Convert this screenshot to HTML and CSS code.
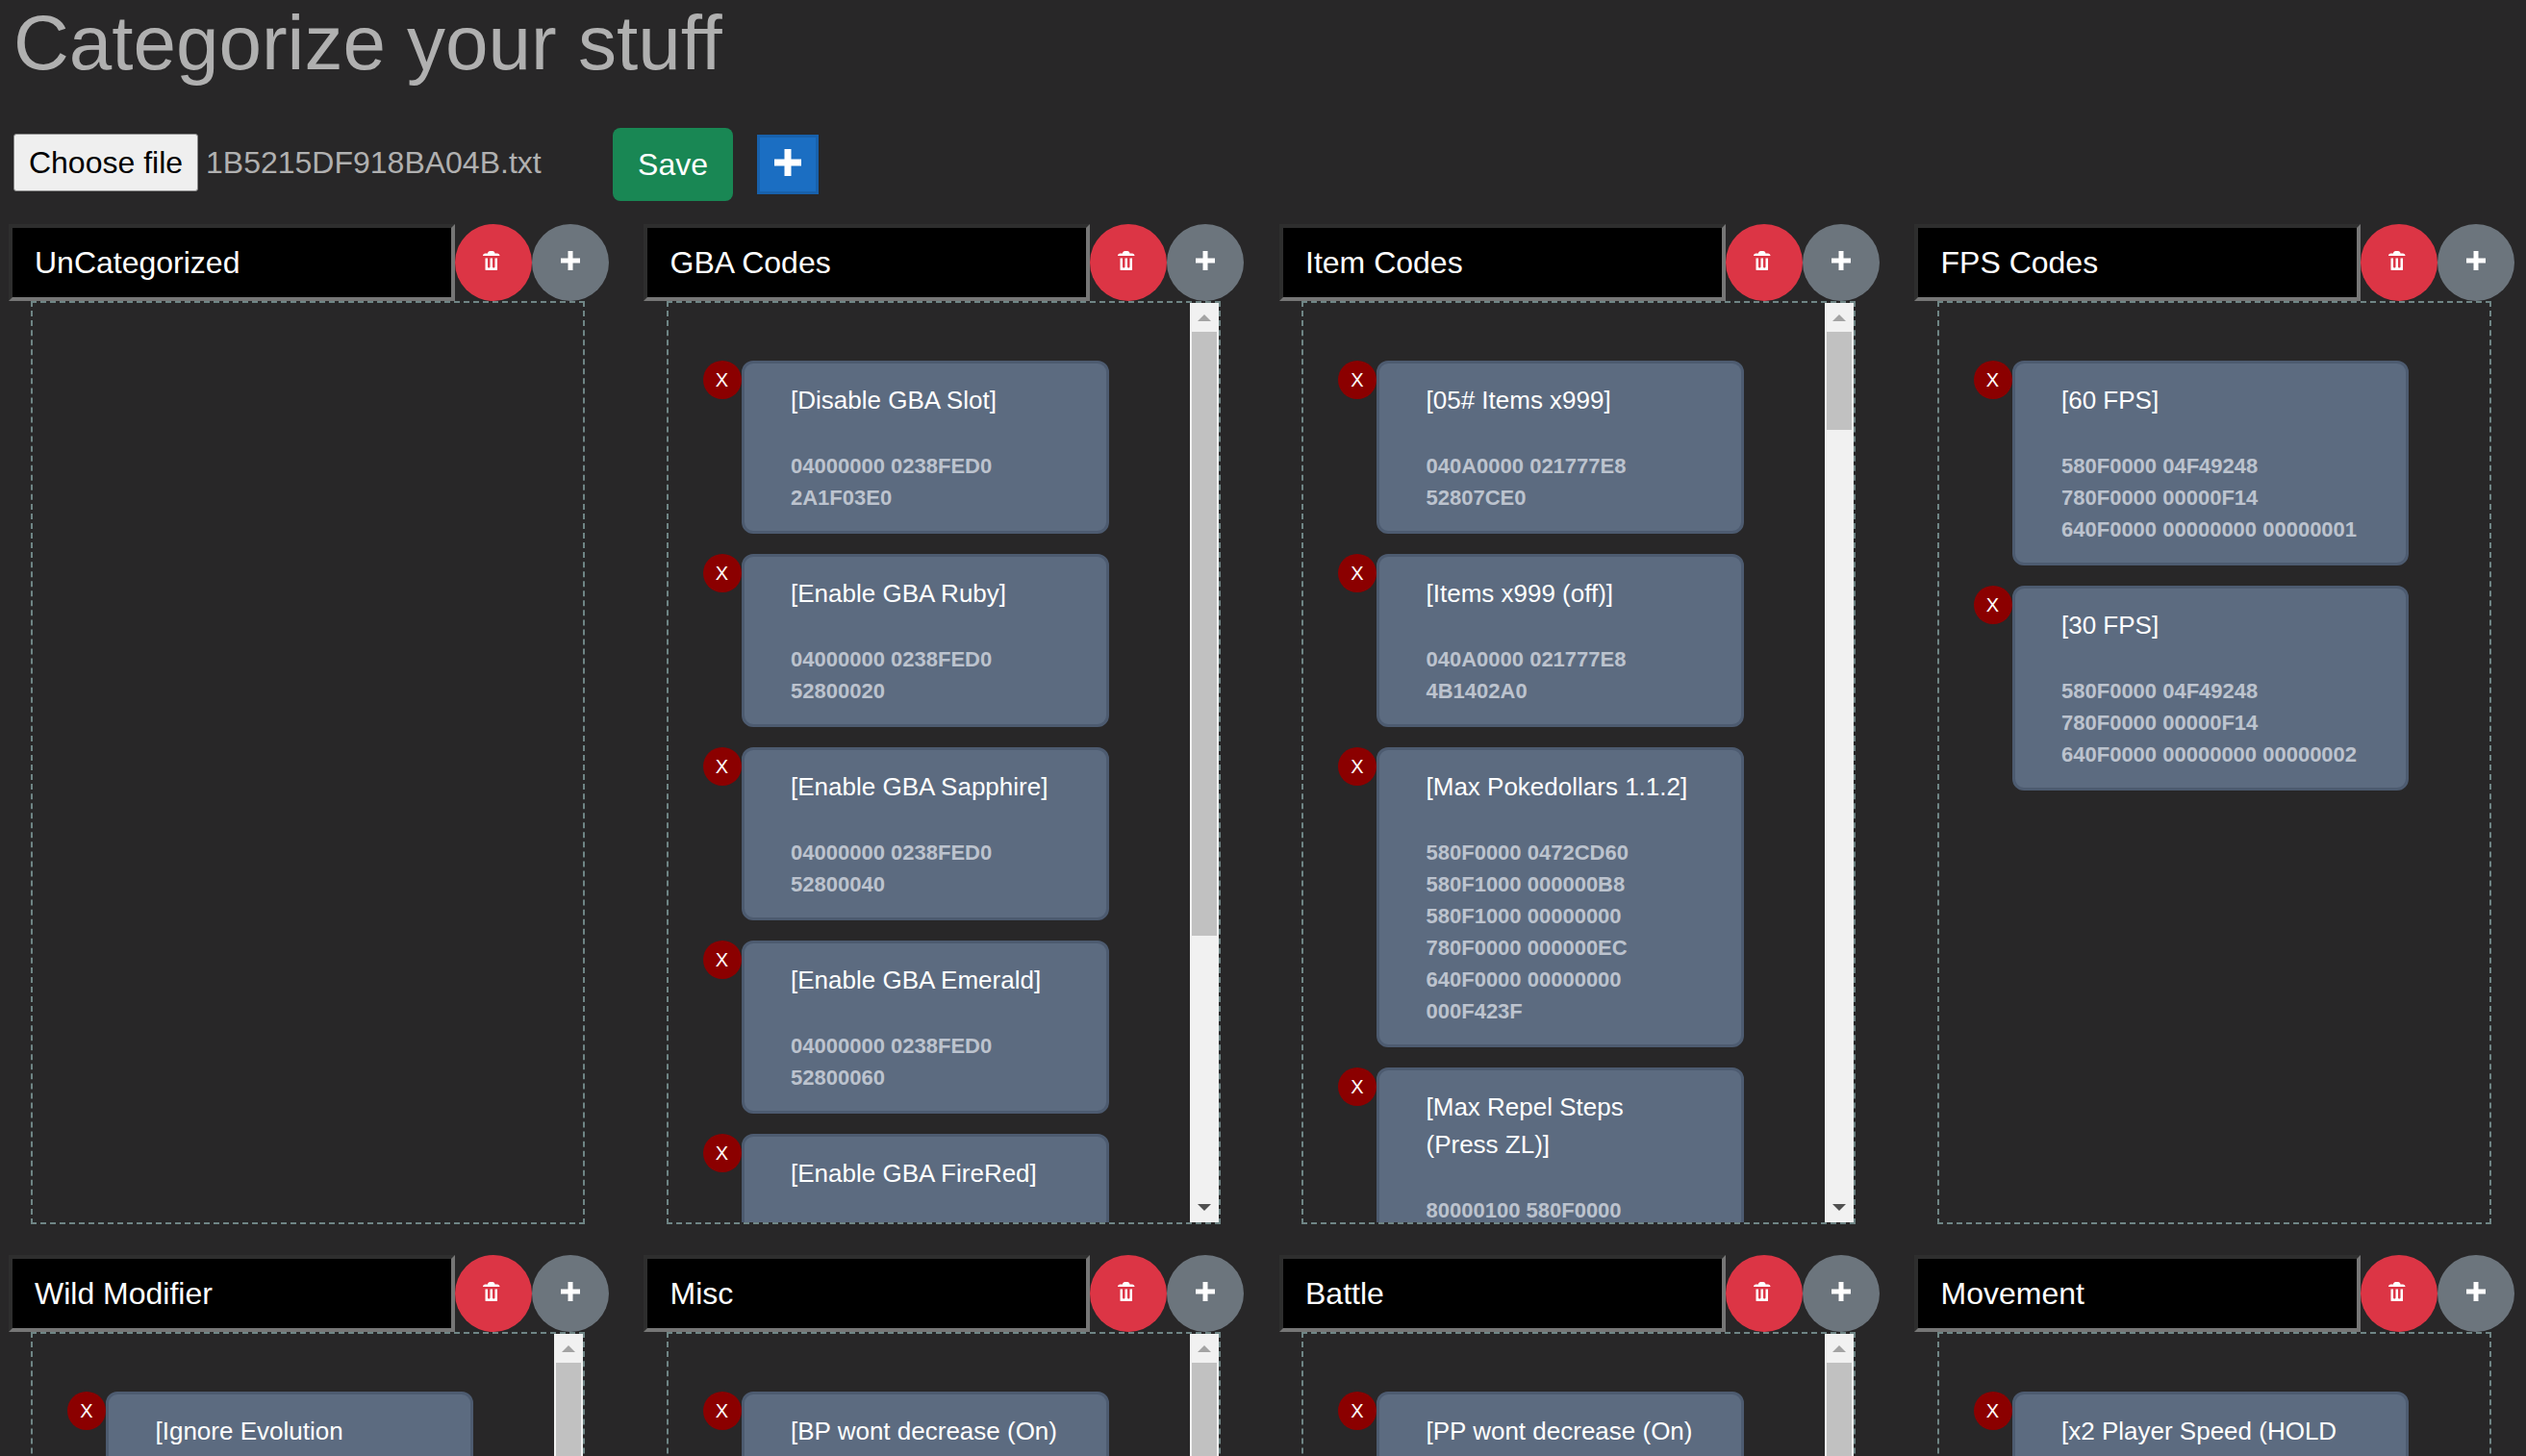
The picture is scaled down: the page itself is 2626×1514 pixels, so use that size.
FILE: index.html
```html
<!DOCTYPE html>
<html lang="en">
<head>
    <meta charset="UTF-8">
    <meta name="viewport" content="width=device-width, initial-scale=1.0">
    <title>Categorize your stuff</title>
    <link rel="stylesheet" href="styles.css">
</head>
<body>
    <svg class="icon-defs" width="0" height="0">
        <symbol id="icon-trash" viewBox="0 0 8 8">
            <path d="M3 0c-.55 0-1 .45-1 1h-1c-.55 0-1 .45-1 1h7c0-.55-.45-1-1-1h-1c0-.55-.45-1-1-1h-1zm-2 3v4.81c0 .11.08.19.19.19h4.63c.11 0 .19-.08.19-.19v-4.81h-1v3.5c0 .28-.22.5-.5.5s-.5-.22-.5-.5v-3.5h-1v3.5c0 .28-.22.5-.5.5s-.5-.22-.5-.5v-3.5h-1z"/>
        </symbol>
        <symbol id="icon-plus" viewBox="0 0 8 8">
            <path d="M3 0v3h-3v2h3v3h2v-3h3v-2h-3v-3h-2z"/>
        </symbol>
    </svg>

    <h1 class="page-title">Categorize your stuff</h1>

    <div class="toolbar">
        <button class="file-button">Choose file</button>
        <span class="file-name">1B5215DF918BA04B.txt</span>
        <button class="save-button">Save</button>
        <button class="add-button"><svg><use href="#icon-plus"></use></svg></button>
    </div>

    <div class="board">
        <section class="category">
            <div class="category-head">
                <div class="category-name">UnCategorized</div>
                <button class="round-button delete"><svg><use href="#icon-trash"></use></svg></button>
                <button class="round-button add"><svg><use href="#icon-plus"></use></svg></button>
            </div>
            <div class="drop-zone"></div>
        </section>

        <section class="category">
            <div class="category-head">
                <div class="category-name">GBA Codes</div>
                <button class="round-button delete"><svg><use href="#icon-trash"></use></svg></button>
                <button class="round-button add"><svg><use href="#icon-plus"></use></svg></button>
            </div>
            <div class="drop-zone scrolling">
                <div class="cheat">
                    <button class="remove">X</button>
                    <div class="cheat-card">
                        <div class="cheat-title">[Disable GBA Slot]</div>
                        <div class="cheat-code">04000000 0238FED0<br>2A1F03E0</div>
                    </div>
                </div>
                <div class="cheat">
                    <button class="remove">X</button>
                    <div class="cheat-card">
                        <div class="cheat-title">[Enable GBA Ruby]</div>
                        <div class="cheat-code">04000000 0238FED0<br>52800020</div>
                    </div>
                </div>
                <div class="cheat">
                    <button class="remove">X</button>
                    <div class="cheat-card">
                        <div class="cheat-title">[Enable GBA Sapphire]</div>
                        <div class="cheat-code">04000000 0238FED0<br>52800040</div>
                    </div>
                </div>
                <div class="cheat">
                    <button class="remove">X</button>
                    <div class="cheat-card">
                        <div class="cheat-title">[Enable GBA Emerald]</div>
                        <div class="cheat-code">04000000 0238FED0<br>52800060</div>
                    </div>
                </div>
                <div class="cheat">
                    <button class="remove">X</button>
                    <div class="cheat-card">
                        <div class="cheat-title">[Enable GBA FireRed]</div>
                        <div class="cheat-code">04000000 0238FED0<br>52800080</div>
                    </div>
                </div>
                <div class="scrollbar">
                    <div class="scroll-arrow up"></div>
                    <div class="scroll-track"><div class="scroll-thumb" style="height: 628px"></div></div>
                    <div class="scroll-arrow down"></div>
                </div>
            </div>
        </section>

        <section class="category">
            <div class="category-head">
                <div class="category-name">Item Codes</div>
                <button class="round-button delete"><svg><use href="#icon-trash"></use></svg></button>
                <button class="round-button add"><svg><use href="#icon-plus"></use></svg></button>
            </div>
            <div class="drop-zone scrolling">
                <div class="cheat">
                    <button class="remove">X</button>
                    <div class="cheat-card">
                        <div class="cheat-title">[05# Items x999]</div>
                        <div class="cheat-code">040A0000 021777E8<br>52807CE0</div>
                    </div>
                </div>
                <div class="cheat">
                    <button class="remove">X</button>
                    <div class="cheat-card">
                        <div class="cheat-title">[Items x999 (off)]</div>
                        <div class="cheat-code">040A0000 021777E8<br>4B1402A0</div>
                    </div>
                </div>
                <div class="cheat">
                    <button class="remove">X</button>
                    <div class="cheat-card">
                        <div class="cheat-title">[Max Pokedollars 1.1.2]</div>
                        <div class="cheat-code">580F0000 0472CD60<br>580F1000 000000B8<br>580F1000 00000000<br>780F0000 000000EC<br>640F0000 00000000<br>000F423F</div>
                    </div>
                </div>
                <div class="cheat">
                    <button class="remove">X</button>
                    <div class="cheat-card">
                        <div class="cheat-title">[Max Repel Steps<br>(Press ZL)]</div>
                        <div class="cheat-code">80000100 580F0000</div>
                    </div>
                </div>
                <div class="scrollbar">
                    <div class="scroll-arrow up"></div>
                    <div class="scroll-track"><div class="scroll-thumb" style="height: 102px"></div></div>
                    <div class="scroll-arrow down"></div>
                </div>
            </div>
        </section>

        <section class="category">
            <div class="category-head">
                <div class="category-name">FPS Codes</div>
                <button class="round-button delete"><svg><use href="#icon-trash"></use></svg></button>
                <button class="round-button add"><svg><use href="#icon-plus"></use></svg></button>
            </div>
            <div class="drop-zone">
                <div class="cheat">
                    <button class="remove">X</button>
                    <div class="cheat-card">
                        <div class="cheat-title">[60 FPS]</div>
                        <div class="cheat-code">580F0000 04F49248<br>780F0000 00000F14<br>640F0000 00000000 00000001</div>
                    </div>
                </div>
                <div class="cheat">
                    <button class="remove">X</button>
                    <div class="cheat-card">
                        <div class="cheat-title">[30 FPS]</div>
                        <div class="cheat-code">580F0000 04F49248<br>780F0000 00000F14<br>640F0000 00000000 00000002</div>
                    </div>
                </div>
            </div>
        </section>

        <section class="category">
            <div class="category-head">
                <div class="category-name">Wild Modifier</div>
                <button class="round-button delete"><svg><use href="#icon-trash"></use></svg></button>
                <button class="round-button add"><svg><use href="#icon-plus"></use></svg></button>
            </div>
            <div class="drop-zone scrolling">
                <div class="cheat">
                    <button class="remove">X</button>
                    <div class="cheat-card">
                        <div class="cheat-title">[Ignore Evolution</div>
                    </div>
                </div>
                <div class="scrollbar">
                    <div class="scroll-arrow up"></div>
                    <div class="scroll-track"><div class="scroll-thumb" style="height: 400px"></div></div>
                    <div class="scroll-arrow down"></div>
                </div>
            </div>
        </section>

        <section class="category">
            <div class="category-head">
                <div class="category-name">Misc</div>
                <button class="round-button delete"><svg><use href="#icon-trash"></use></svg></button>
                <button class="round-button add"><svg><use href="#icon-plus"></use></svg></button>
            </div>
            <div class="drop-zone scrolling">
                <div class="cheat">
                    <button class="remove">X</button>
                    <div class="cheat-card">
                        <div class="cheat-title">[BP wont decrease (On)</div>
                    </div>
                </div>
                <div class="scrollbar">
                    <div class="scroll-arrow up"></div>
                    <div class="scroll-track"><div class="scroll-thumb" style="height: 400px"></div></div>
                    <div class="scroll-arrow down"></div>
                </div>
            </div>
        </section>

        <section class="category">
            <div class="category-head">
                <div class="category-name">Battle</div>
                <button class="round-button delete"><svg><use href="#icon-trash"></use></svg></button>
                <button class="round-button add"><svg><use href="#icon-plus"></use></svg></button>
            </div>
            <div class="drop-zone scrolling">
                <div class="cheat">
                    <button class="remove">X</button>
                    <div class="cheat-card">
                        <div class="cheat-title">[PP wont decrease (On)</div>
                    </div>
                </div>
                <div class="scrollbar">
                    <div class="scroll-arrow up"></div>
                    <div class="scroll-track"><div class="scroll-thumb" style="height: 400px"></div></div>
                    <div class="scroll-arrow down"></div>
                </div>
            </div>
        </section>

        <section class="category">
            <div class="category-head">
                <div class="category-name">Movement</div>
                <button class="round-button delete"><svg><use href="#icon-trash"></use></svg></button>
                <button class="round-button add"><svg><use href="#icon-plus"></use></svg></button>
            </div>
            <div class="drop-zone">
                <div class="cheat">
                    <button class="remove">X</button>
                    <div class="cheat-card">
                        <div class="cheat-title">[x2 Player Speed (HOLD</div>
                    </div>
                </div>
            </div>
        </section>
    </div>
</body>
</html>
```

FILE: styles.css
```css
html, body {
    height: 100%;
    overflow: hidden;
}

body {
    margin: 0;
    background-color: #282728;
    color: #b0b0b0;
    font-family: "Liberation Sans", Arial, sans-serif;
}

.icon-defs {
    display: block;
    height: 0;
}

.page-title {
    margin: 0;
    padding-left: 14px;
    height: 133px;
    font-size: 80px;
    font-weight: 300;
    line-height: 90px;
    color: #b0b0b0;
}

.toolbar {
    display: flex;
    align-items: center;
    height: 76px;
    padding-left: 14px;
}

.file-button {
    width: 192px;
    height: 60px;
    padding: 0;
    margin-top: -4px;
    background-color: #efefef;
    border: 1px solid #8a8a8a;
    border-radius: 3px;
    color: #000;
    font-family: inherit;
    font-size: 32px;
}

.file-name {
    margin-top: -4px;
    margin-left: 8px;
    width: 423px;
    font-size: 32px;
}

.save-button {
    width: 125px;
    height: 76px;
    padding: 0;
    background-color: #198754;
    border: none;
    border-radius: 8px;
    color: #fff;
    font-family: inherit;
    font-size: 32px;
}

.add-button {
    display: flex;
    align-items: center;
    justify-content: center;
    width: 64px;
    height: 62px;
    margin-left: 25px;
    padding: 0;
    background-color: #1b6ec2;
    border: 3px solid #1861ac;
    fill: #fff;
}

.add-button svg {
    width: 28px;
    height: 28px;
    margin-bottom: 4px;
}

.board {
    display: grid;
    grid-template-columns: repeat(4, 660.5px);
    grid-auto-rows: 1072px;
    padding-left: 8.5px;
    margin-top: 24px;
}

.category-head {
    display: flex;
    height: 80px;
}

.category-name {
    box-sizing: border-box;
    width: 464px;
    height: 80px;
    padding-left: 23.5px;
    background-color: #000;
    border: 4px solid;
    border-color: #2e2e2e #767676 #767676 #2e2e2e;
    color: #fff;
    font-size: 32px;
    line-height: 72px;
}

.round-button {
    display: flex;
    align-items: center;
    justify-content: center;
    width: 80px;
    height: 80px;
    padding: 0;
    border: none;
    border-radius: 50%;
    fill: #fff;
}

.round-button svg {
    width: 20px;
    height: 20px;
    margin-bottom: 4px;
}

.round-button.delete {
    background-color: #dc3545;
}

.round-button.delete svg {
    margin-left: -2px;
}

.round-button.add {
    background-color: #6c757d;
}

.drop-zone {
    position: relative;
    box-sizing: border-box;
    width: 576px;
    height: 960px;
    margin-left: 23.5px;
    padding: 60px 84px 0 36px;
    border: 2px dashed #6f8585;
    overflow: hidden;
}

.drop-zone.scrolling {
    padding-right: 114px;
}

.cheat {
    display: flex;
    align-items: flex-start;
    margin-bottom: 21px;
}

.remove {
    flex: none;
    width: 40px;
    height: 40px;
    padding: 0;
    background-color: #8b0000;
    border: none;
    border-radius: 50%;
    color: #fff;
    font-family: inherit;
    font-size: 20px;
}

.cheat-card {
    flex: 1;
    min-width: 0;
    padding: 19px 48.5px 18px;
    background-color: #5c6b80;
    border: 3px solid #4d5b70;
    border-radius: 12px;
    color: #fff;
    font-size: 26px;
    line-height: 39px;
}

.cheat-code {
    margin-top: 32px;
    color: #bcc3ce;
    font-size: 22px;
    font-weight: bold;
    line-height: 33px;
}

/* painted by hand, the real one is not in the screenshots */
.scrollbar {
    position: absolute;
    top: 0;
    right: 0;
    bottom: 0;
    display: flex;
    flex-direction: column;
    width: 30px;
    background-color: #f1f1f1;
}

.scroll-arrow {
    flex: none;
    position: relative;
    height: 30px;
}

.scroll-arrow::after {
    content: "";
    position: absolute;
    left: 8px;
    border-left: 7px solid transparent;
    border-right: 7px solid transparent;
}

.scroll-arrow.up::after {
    top: 12px;
    border-bottom: 7px solid #a3a3a3;
}

.scroll-arrow.down::after {
    bottom: 12px;
    border-top: 7px solid #505050;
}

.scroll-track {
    flex: 1;
}

.scroll-thumb {
    margin: 0 2px;
    background-color: #c1c1c1;
}
```
